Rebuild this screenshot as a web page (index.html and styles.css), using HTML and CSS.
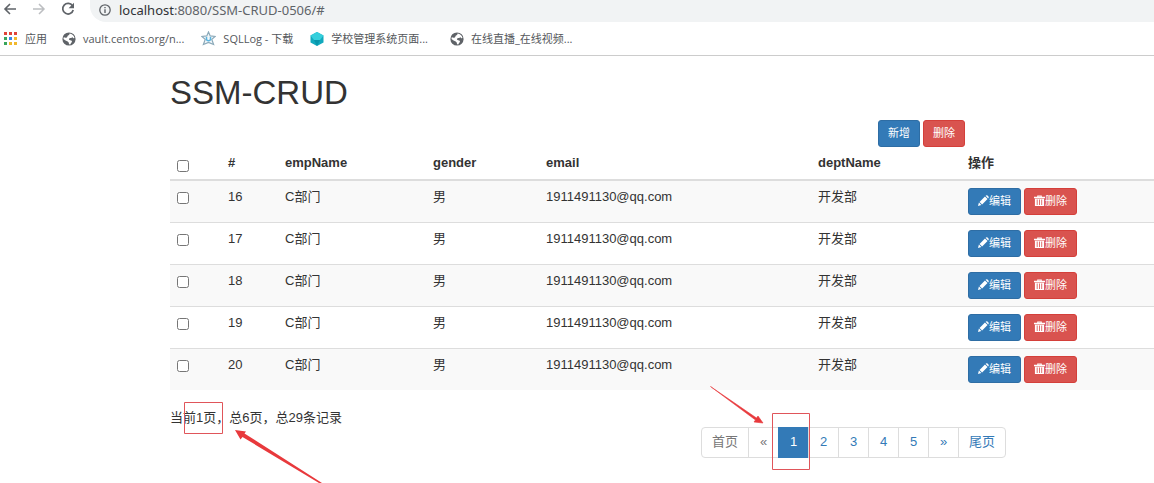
FILE: index.html
```html
<!DOCTYPE html>
<html lang="zh-CN">
<head>
<meta charset="utf-8">
<title>SSM-CRUD</title>
<link rel="stylesheet" href="styles.css">
</head>
<body>
<svg class="defs" aria-hidden="true">
  <symbol id="globe" viewBox="0 0 14 14"><circle cx="7" cy="7" r="6.6" fill="#5f6368"/><path d="M7.5 1.5c2.6.3 4.6 2 5 4.6-1 .4-1.5-.3-2-.9-.8.2-1.100.8-2.200.7-.9.1-1.500.7-1.300 1.500.5.9 1.900.5 2.700 1.300.6.7 0 1.600-.6 2.200-.6.6-.4 1.400-1.500 1.700-.9-.4-.6-1.600-1.100-2.300C5.800 9.200 3.800 9 1.500 7c0-.7.1-1.300.3-1.800 1 .4 2 .7 2.900.2C5.800 4.800 5.100 4 6 3.500c.9-.4 1.700-.8 1.500-2z" fill="#fff"/></symbol>
  <symbol id="pencil" viewBox="0 0 12 12"><path d="M0 12l1-3.700 2.700 2.700zM1.700 7.500L7.600 1.600l2.800 2.800-5.900 5.900zM8.300.9C9 .1 9.700 0 10.300.6l1.100 1.100c.6.6.5 1.300-.3 2z" fill="#fff"/></symbol>
  <symbol id="trash" viewBox="0 0 12 12"><path d="M3.500 2V.5h5V2H12v1.500H0V2zM4.700 2h2.600v-.5H4.700zM1 4h10v8H1zM3 5v6h.9V5zm2.500 0v6h.9V5zM8 5v6h.9V5z" fill="#fff" fill-rule="evenodd"/></symbol>
</svg>
<header class="browser">
  <div class="toolbar">
    <button class="nav" aria-label="后退"><svg width="14" height="14" viewBox="0 0 14 14"><path d="M13 7H2M7 2L2 7l5 5" fill="none" stroke="#5f6368" stroke-width="1.600"/></svg></button>
    <button class="nav" aria-label="前进"><svg width="14" height="14" viewBox="0 0 14 14"><path d="M1 7h11M7 2l5 5-5 5" fill="none" stroke="#bcbec1" stroke-width="1.500"/></svg></button>
    <button class="nav" aria-label="刷新"><svg width="14" height="14" viewBox="0 0 14 14"><path d="M11.500 3.800A5.300 5.300 0 1 0 12.200 8" fill="none" stroke="#5f6368" stroke-width="1.700"/><path d="M13 .8v5.400H7.600z" fill="#5f6368"/></svg></button>
    <div class="address">
      <svg width="12" height="12" viewBox="0 0 12 12"><circle cx="6" cy="6" r="5.200" fill="none" stroke="#5f6368" stroke-width="1.300"/><path d="M6 5.300V9M6 2.900v1.400" stroke="#5f6368" stroke-width="1.400"/></svg>
      <span><b>localhost</b>:8080/SSM-CRUD-0506/#</span>
    </div>
  </div>
  <nav class="bookmarks">
    <a href="#" class="apps"><svg width="13" height="13" viewBox="0 0 13 13"><path d="M0 0h3v3H0zM5 0h3v3H5zM10 0h3v3h-3z" fill="#e04438"/><path d="M0 5h3v3H0z" fill="#39a55b"/><path d="M5 5h3v3H5z" fill="#3686e8"/><path d="M10 5h3v3h-3zM5 10h3v3H5zM10 10h3v3h-3z" fill="#f1b82c"/><path d="M0 10h3v3H0z" fill="#39a55b"/></svg>应用</a>
    <a href="#" class="vault"><svg width="14" height="14"><use href="#globe"/></svg>vault.centos.org/n...</a>
    <a href="#" class="sqllog"><svg width="15" height="15" viewBox="0 0 15 15"><path d="M7.500 1l1.700 3.900 4.900.5-3.300 3 1.800 5.100-5.100-2-5.100 2 1.800-5.100-3.300-3 4.900-.5z" fill="#f2f8fb" stroke="#8ba9b9" stroke-width="1.200"/><path d="M5.500 6v2c0 2.300 4 2.300 4 0V6" fill="none" stroke="#5ab3df" stroke-width="1.500"/></svg>SQLLog - 下载</a>
    <a href="#" class="school"><svg width="14" height="14" viewBox="0 0 14 14"><path d="M7 0l6.500 3.500v7L7 14 .5 10.500v-7z" fill="#12a9bd"/><path d="M7 0l6.500 3.500L10 8H4L.5 3.500z" fill="#35cfdc"/><path d="M4 8h6l-3 6z" fill="#0795ab"/></svg>学校管理系统页面...</a>
    <a href="#"><svg width="14" height="14"><use href="#globe"/></svg>在线直播_在线视频...</a>
  </nav>
</header>
<main class="container">
  <h1>SSM-CRUD</h1>
  <div class="actions"><button class="btn primary">新增</button><button class="btn danger">删除</button></div>
  <table class="employees">
    <colgroup><col class="c-check"><col class="c-id"><col class="c-name"><col class="c-gender"><col class="c-email"><col class="c-dept"><col></colgroup>
    <thead><tr><th class="low"><input type="checkbox" aria-label="全选"></th><th>#</th><th>empName</th><th>gender</th><th>email</th><th>deptName</th><th>操作</th></tr></thead>
    <tbody>
      <tr><td><input type="checkbox" aria-label="选择 16"></td><td>16</td><td>C部门</td><td>男</td><td>1911491130@qq.com</td><td>开发部</td><td><div class="ops"><button class="btn primary"><svg width="11" height="11"><use href="#pencil"/></svg>编辑</button><button class="btn danger"><svg width="11" height="11"><use href="#trash"/></svg>删除</button></div></td></tr>
      <tr><td><input type="checkbox" aria-label="选择 17"></td><td>17</td><td>C部门</td><td>男</td><td>1911491130@qq.com</td><td>开发部</td><td><div class="ops"><button class="btn primary"><svg width="11" height="11"><use href="#pencil"/></svg>编辑</button><button class="btn danger"><svg width="11" height="11"><use href="#trash"/></svg>删除</button></div></td></tr>
      <tr><td><input type="checkbox" aria-label="选择 18"></td><td>18</td><td>C部门</td><td>男</td><td>1911491130@qq.com</td><td>开发部</td><td><div class="ops"><button class="btn primary"><svg width="11" height="11"><use href="#pencil"/></svg>编辑</button><button class="btn danger"><svg width="11" height="11"><use href="#trash"/></svg>删除</button></div></td></tr>
      <tr><td><input type="checkbox" aria-label="选择 19"></td><td>19</td><td>C部门</td><td>男</td><td>1911491130@qq.com</td><td>开发部</td><td><div class="ops"><button class="btn primary"><svg width="11" height="11"><use href="#pencil"/></svg>编辑</button><button class="btn danger"><svg width="11" height="11"><use href="#trash"/></svg>删除</button></div></td></tr>
      <tr><td><input type="checkbox" aria-label="选择 20"></td><td>20</td><td>C部门</td><td>男</td><td>1911491130@qq.com</td><td>开发部</td><td><div class="ops"><button class="btn primary"><svg width="11" height="11"><use href="#pencil"/></svg>编辑</button><button class="btn danger"><svg width="11" height="11"><use href="#trash"/></svg>删除</button></div></td></tr>
    </tbody>
  </table>
  <div class="footer">
    <p class="summary">当前1页，总6页，总29条记录</p>
    <ul class="pagination">
      <li><a href="#" class="muted">首页</a></li><li><a href="#" class="muted">«</a></li><li><a href="#" class="active">1</a></li><li><a href="#">2</a></li><li><a href="#">3</a></li><li><a href="#">4</a></li><li><a href="#">5</a></li><li><a href="#">»</a></li><li><a href="#">尾页</a></li>
    </ul>
  </div>
</main>
<svg class="marks" width="660" height="104" viewBox="170 379 660 104" aria-hidden="true">
  <path d="M184.500 402.500h38v31h-38zM772.500 413.500h37v56h-37z" fill="none" stroke="#e0555a"/>
  <path d="M235 430l11 1.500-1.500 2L322 483h-3l-76.500-46-2 2.500z" fill="#e8393c"/>
  <path d="M710.500 386.500l46 31.500 1.500-2 5 7-9-1 1.500-2z" fill="#e8393c" stroke="#e8393c" stroke-width=".6"/>
</svg>
</body>
</html>
```
FILE: styles.css
```css
* { box-sizing: border-box; }
body {
  margin: 0;
  position: relative;
  min-height: 100vh;
  background: #fff;
  color: #333;
  font: 13px/18px "Liberation Sans", "Noto Sans CJK SC", sans-serif;
}
a { text-decoration: none; }
button { font-family: inherit; }
.defs { display: none; }

.browser {
  font-family: "Open Sans", "Noto Sans CJK SC", sans-serif;
  color: #5f6368;
  border-bottom: 1px solid #ccc;
}
.toolbar { display: flex; gap: 15px; padding-left: 3px; height: 22px; }
.nav { width: 14px; height: 18px; padding: 0; border: 0; background: none; display: flex; align-items: center; }
.address {
  flex: 1;
  display: flex;
  align-items: center;
  gap: 8px;
  padding: 0 9px 3px;
  background: #f1f3f4;
  border-radius: 0 0 0 16px;
  font-family: "Noto Sans", sans-serif;
  font-size: 13px;
}
.address b { font-weight: 400; color: #303236; }
.bookmarks { display: flex; gap: 17px; align-items: center; height: 33px; padding-left: 4px; }
.bookmarks a { display: flex; align-items: center; gap: 7px; color: #54575b; font-size: 11px; white-space: nowrap; }
.bookmarks .apps { gap: 8px; margin-right: -2px; }
.bookmarks .school { margin-right: 5px; }

.container { padding: 0 0 25px 170px; }
h1 { margin: 19px 0 9px; font-size: 33px; line-height: 36px; font-weight: 400; }
.actions { display: flex; gap: 3px; padding-left: 708px; }
.btn {
  display: flex;
  align-items: center;
  height: 27px;
  padding: 0 9px 2px;
  border: 1px solid;
  border-radius: 3px;
  color: #fff;
  font-size: 11px;
  line-height: 16px;
}
.primary { background: #337ab7; border-color: #2e6da4; }
.danger { background: #d9534f; border-color: #d43f3a; }

.employees { width: 100%; table-layout: fixed; border-collapse: separate; border-spacing: 0; }
.c-check { width: 51px; }
.c-id { width: 57px; }
.c-name { width: 148px; }
.c-gender { width: 113px; }
.c-email { width: 272px; }
.c-dept { width: 150px; }
th, td { padding: 7px; text-align: left; vertical-align: top; }
th { border-bottom: 2px solid #ddd; }
td { border-top: 1px solid #ddd; }
tbody tr:first-child td { border-top: 0; }
tbody tr:nth-child(odd) { background: #f9f9f9; }
input[type="checkbox"] { display: block; width: 12px; height: 12px; margin: 4px 0 0; }
th.low { vertical-align: bottom; }
.ops { display: flex; gap: 3px; }

.footer { display: grid; grid-template-columns: 531px 1fr; }
.summary { margin: 19px 0 0; }
.pagination { display: flex; margin: 37px 0 0; padding: 0; list-style: none; }
.pagination a {
  display: block;
  min-width: 31px;
  padding: 4px 10px 6px;
  margin-left: -1px;
  border: 1px solid #ddd;
  color: #337ab7;
  line-height: 19px;
  text-align: center;
}
.pagination li:first-child a { margin-left: 0; border-radius: 4px 0 0 4px; }
.pagination li:last-child a { border-radius: 0 4px 4px 0; }
.pagination .muted { color: #777; }
.pagination .active { background: #337ab7; border-color: #337ab7; color: #fff; }

.marks { position: absolute; left: 170px; top: 379px; pointer-events: none; }
```
